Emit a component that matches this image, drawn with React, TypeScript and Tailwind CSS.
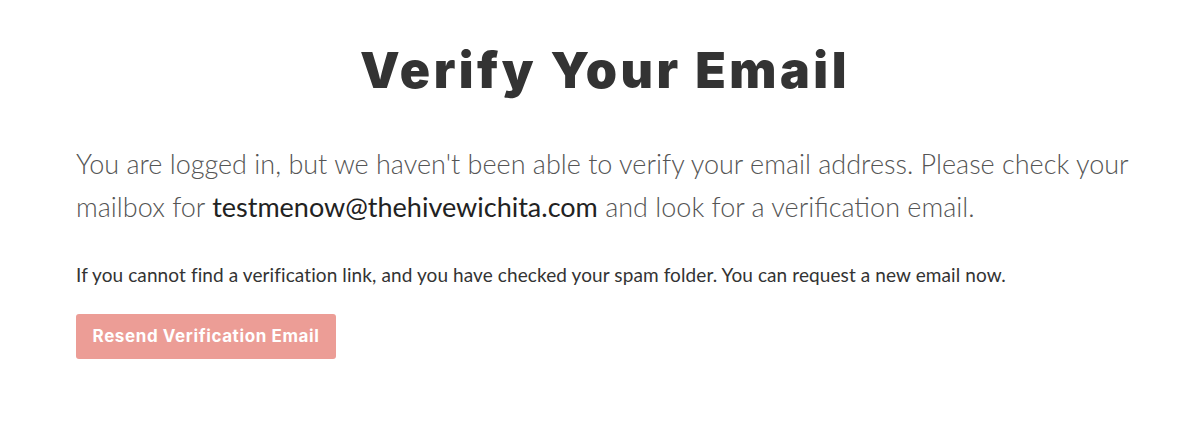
import React from "react";

const App = () => {
  return (
    <div className="min-h-[421px] bg-white">
      <div className="ml-[76px] w-[1058px] pt-[38px]">
        <h1 className="text-center font-['Inter',sans-serif] text-[50px] font-black leading-[64px] tracking-[3.5px] text-[#333333]">
          Verify Your Email
        </h1>
        <p className="mt-[40px] font-['Lato',sans-serif] text-[27px] font-light leading-[43px] text-[#555555]">
          You are logged in, but we haven't been able to verify your email address. Please check your mailbox for{" "}
          <span className="font-normal text-[#222222]">testmenow@thehivewichita.com</span> and look for a verification email.
        </p>
        <p className="mt-[35px] font-['Lato',sans-serif] text-[19px] leading-[24px] tracking-[0.1px] text-[#333333]">
          If you cannot find a verification link, and you have checked your spam folder. You can request a new email now.
        </p>
        <button className="mt-[27px] h-[45px] w-[260px] rounded-[3px] bg-[#ec9d96] font-['Inter',sans-serif] text-[17px] font-bold tracking-[0.6px] text-white">
          Resend Verification Email
        </button>
      </div>
    </div>
  );
};

export default App;
